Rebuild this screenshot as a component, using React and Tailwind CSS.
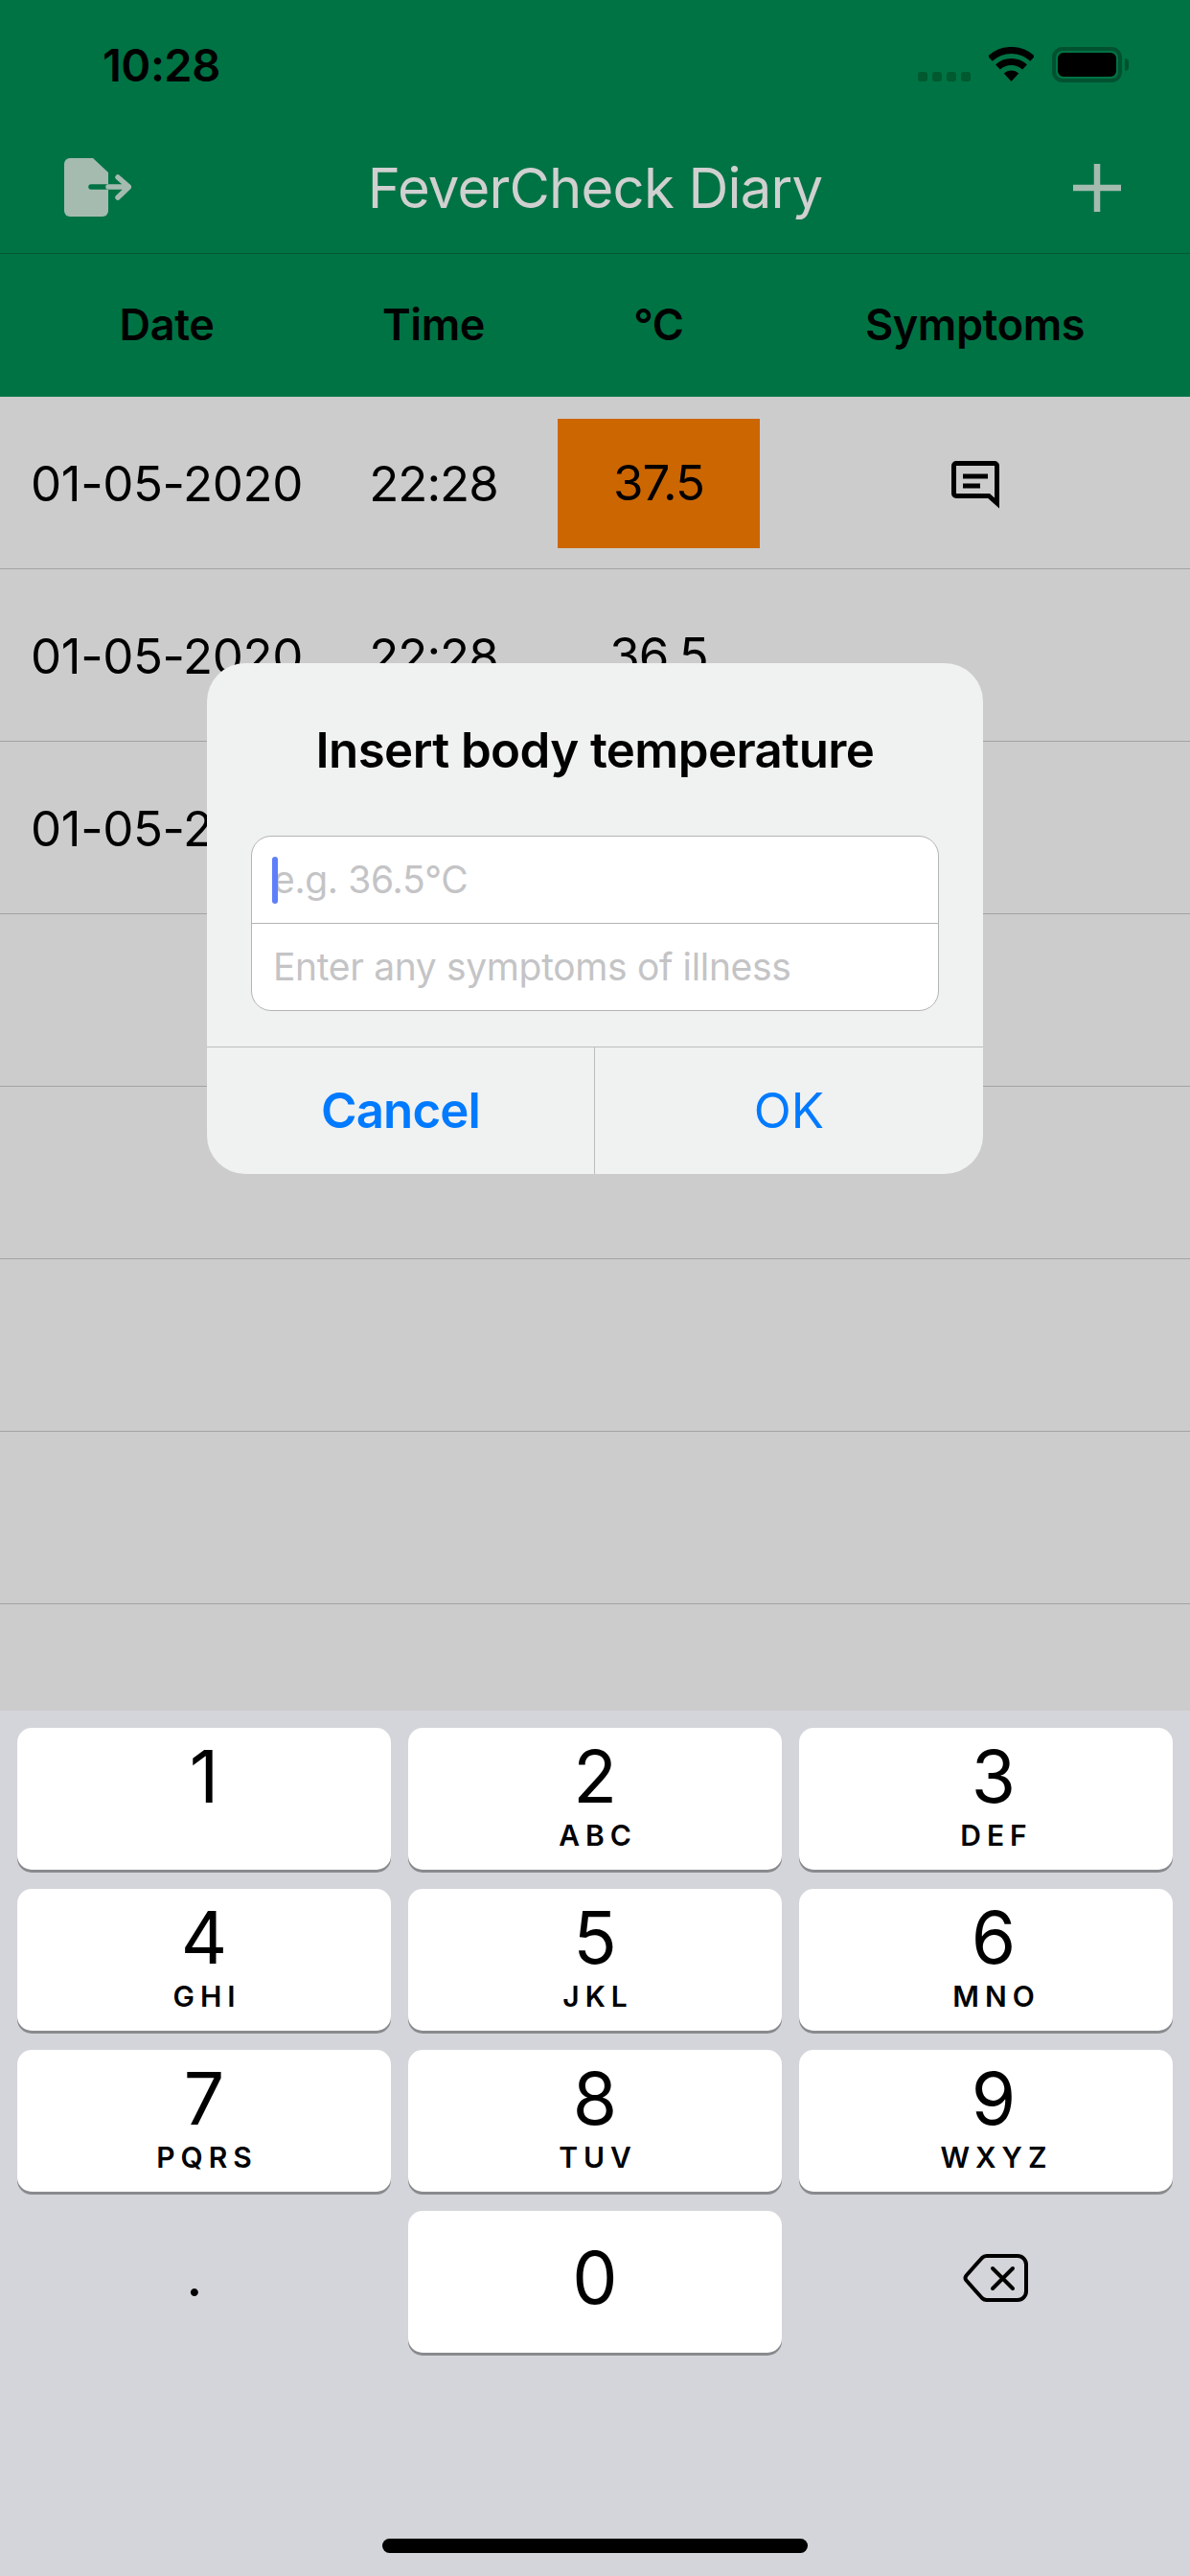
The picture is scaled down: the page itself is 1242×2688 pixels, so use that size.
// App.jsx
import React from 'react';

const rows = [
  { date: '01-05-2020', time: '22:28', temp: '37.5', high: true, note: true },
  { date: '01-05-2020', time: '22:28', temp: '36.5' },
  { date: '01-05-2020', time: '22:28', temp: '36.5' },
  {}, {}, {}, {},
];

const keys = [
  ['1', ''], ['2', 'ABC'], ['3', 'DEF'],
  ['4', 'GHI'], ['5', 'JKL'], ['6', 'MNO'],
  ['7', 'PQRS'], ['8', 'TUV'], ['9', 'WXYZ'],
];

function Wifi() {
  return (
    <svg width="47" height="36" viewBox="0 0 47 36" className="block">
      <path d="M1.3 12.2A32.5 32.5 0 0 1 45.7 12.2" fill="none" stroke="#000" strokeWidth="7" />
      <path d="M9.5 21A20.5 20.5 0 0 1 37.5 21" fill="none" stroke="#000" strokeWidth="7" />
      <path d="M23.5 36L15.7 27.6A11.5 11.5 0 0 1 31.3 27.6Z" fill="#000" />
    </svg>
  );
}

function StatusBar() {
  return (
    <div className="h-[132px] flex items-start justify-between pl-[107px] pr-[71px] pt-[49px]">
      <span className="text-[47px] leading-[38px] font-semibold tracking-[-0.5px]">10:28</span>
      <div className="flex items-start">
        <div className="flex gap-[5px] mt-[26px] mr-[19px]">
          <i className="block w-[10px] h-[10px] rounded-[3px] bg-[#00592f]" />
          <i className="block w-[10px] h-[10px] rounded-[3px] bg-[#00592f]" />
          <i className="block w-[10px] h-[10px] rounded-[3px] bg-[#00592f]" />
          <i className="block w-[10px] h-[10px] rounded-[3px] bg-[#00592f]" />
        </div>
        <Wifi />
        <div className="ml-[19px] w-[73px] h-[37px] rounded-[11px] border-[4px] border-[#00512f] p-[2px] relative">
          <div className="w-full h-full rounded-[6px] bg-black" />
          <div className="absolute top-[8px] right-[-11px] w-[4px] h-[13px] rounded-r-[4px] bg-[#00512f]" />
        </div>
      </div>
    </div>
  );
}

function ExitIcon() {
  return (
    <svg width="70" height="62" viewBox="0 0 70 62" className="block">
      <path d="M6 0H30L46 15V55a6 6 0 0 1-6 6H6a6 6 0 0 1-6-6V6a6 6 0 0 1 6-6Z" fill="#a5bbb0" />
      <path d="M28 30H46" stroke="#007344" strokeWidth="5.5" strokeLinecap="round" />
      <path d="M46 30H67M56 20L67.5 30L56 41" fill="none" stroke="#a5bbb0" strokeWidth="5.5" strokeLinecap="round" strokeLinejoin="round" />
    </svg>
  );
}

function NoteIcon() {
  return (
    <svg width="50" height="50" viewBox="0 0 50 50" className="block">
      <path d="M5 2.5H45a2.5 2.5 0 0 1 2.5 2.5V44L39 36.5H5a2.5 2.5 0 0 1-2.5-2.5V5A2.5 2.5 0 0 1 5 2.5Z" fill="none" stroke="#000" strokeWidth="5" />
      <path d="M12 16H38M12 26H30" stroke="#000" strokeWidth="5" />
    </svg>
  );
}

function BackspaceIcon() {
  return (
    <svg width="68" height="50" viewBox="0 0 68 50" className="block">
      <path d="M25 2H57a9 9 0 0 1 9 9V39a9 9 0 0 1-9 9H25a7 7 0 0 1-5-2L3.5 27.5a4 4 0 0 1 0-5L20 4a7 7 0 0 1 5-2Z" fill="none" stroke="#000" strokeWidth="4" strokeLinejoin="round" />
      <path d="M31 15L52 36M52 15L31 36" stroke="#000" strokeWidth="4" strokeLinecap="round" />
    </svg>
  );
}

function Key({ digit, letters, shifted }) {
  return (
    <div className={`h-[148px] rounded-[15px] bg-white shadow-[0_3px_0_#898a8d] flex flex-col items-center ${shifted ? 'pl-[16px]' : ''}`}>
      <span className="mt-[13px] text-[75px] leading-[75px] font-[380]">{digit}</span>
      {letters && <span className="mt-[9px] text-[30px] leading-[30px] font-semibold tracking-[6px] mr-[-6px]">{letters}</span>}
    </div>
  );
}

function Dialog() {
  return (
    <div className="absolute left-[216px] top-[692px] w-[810px] h-[533px] rounded-[40px] bg-[#f0f1f1] flex flex-col">
      <div className="h-[180px] pt-[2px] flex items-center justify-center text-[51px] font-semibold tracking-[-0.6px]">
        Insert body temperature
      </div>
      <div className="mx-[46px] h-[183px] rounded-[21px] border border-[#b4b4b4] bg-white flex flex-col text-[39px] tracking-[-0.35px] text-[#c4c4c6] relative">
        <div className="absolute left-[21px] top-[21px] w-[6px] h-[49px] rounded-[3px] bg-[#5f7ffa]" />
        <div className="h-[91px] border-b border-[#b4b4b4] flex items-center pl-[22px]">e.g. 36.5°C</div>
        <div className="flex-1 flex items-center pl-[22px]">Enter any symptoms of illness</div>
      </div>
      <div className="mt-[37px] flex-1 border-t border-[#bdbdbd] grid grid-cols-[405px_405px] text-[51px] text-[#007aff]">
        <div className="flex items-center justify-center font-semibold tracking-[-0.9px] border-r border-[#bdbdbd]">Cancel</div>
        <div className="flex items-center justify-center">OK</div>
      </div>
    </div>
  );
}

export default function App() {
  return (
    <div className="relative w-[1242px] h-[2688px] overflow-hidden flex flex-col bg-[#cccccc] text-black font-['Inter',sans-serif]">
      {/* Green top area */}
      <div className="bg-[#007344]">
        <StatusBar />
        <div className="h-[133px] border-b border-[#00592f] grid grid-cols-[1fr_auto_1fr] items-center pb-[4px]">
          <div className="pl-[67px]"><ExitIcon /></div>
          <div className="text-[58px] leading-none text-[#d0d0d0] tracking-[-0.8px]">FeverCheck Diary</div>
          <div className="flex justify-end pr-[72px]">
            <svg width="50" height="50" viewBox="0 0 50 50" className="block">
              <path d="M25 0V50M0 25H50" stroke="#a5bbb0" strokeWidth="6.5" />
            </svg>
          </div>
        </div>
        <div className="h-[149px] grid grid-cols-[348px_209px_236px_1fr] items-center text-[45px] font-semibold tracking-[-0.4px] pb-[1px]">
          <div className="text-center">Date</div>
          <div className="text-center">Time</div>
          <div className="text-center pl-[25px]">°C</div>
          <div className="text-center">Symptoms</div>
        </div>
      </div>

      {/* Diary rows */}
      <div className="flex-1">
        {rows.map((row, i) => (
          <div key={i} className="h-[180px] border-b border-[#a3a3a3] grid grid-cols-[348px_209px_236px_1fr] items-center text-[51px] font-[380] tracking-[-1px]">
            <div className="text-center pt-[4px] tracking-[-0.4px]">{row.date}</div>
            <div className="text-center pt-[4px]">{row.time}</div>
            <div className="pl-[25px] pt-[2px]">
              {row.temp && (
                <div className={`w-[211px] h-[135px] flex items-center justify-center ${row.high ? 'bg-[#cc6600]' : ''}`}>{row.temp}</div>
              )}
            </div>
            <div className="flex justify-center pt-[5px]">{row.note && <NoteIcon />}</div>
          </div>
        ))}
      </div>

      {/* Number pad */}
      <div className="h-[903px] bg-[#d4d5da] pt-[18px] px-[18px] relative">
        <div className="grid grid-cols-3 gap-x-[18px] gap-y-[20px]">
          {keys.map(([digit, letters], i) => (
            <Key key={digit} digit={digit} letters={letters} shifted={i % 3 === 2} />
          ))}
          <div className="h-[148px] flex justify-center pt-[33px] pr-[20px] text-[51px] font-semibold">.</div>
          <div className="h-[148px] rounded-[15px] bg-white shadow-[0_3px_0_#898a8d] flex justify-center pt-[32px] text-[75px] leading-[75px] font-[380]">0</div>
          <div className="h-[148px] flex justify-center pt-[45px] pl-[20px]"><BackspaceIcon /></div>
        </div>
        <div className="absolute left-[399px] bottom-[24px] w-[444px] h-[15px] rounded-full bg-black" />
      </div>

      <Dialog />
    </div>
  );
}
